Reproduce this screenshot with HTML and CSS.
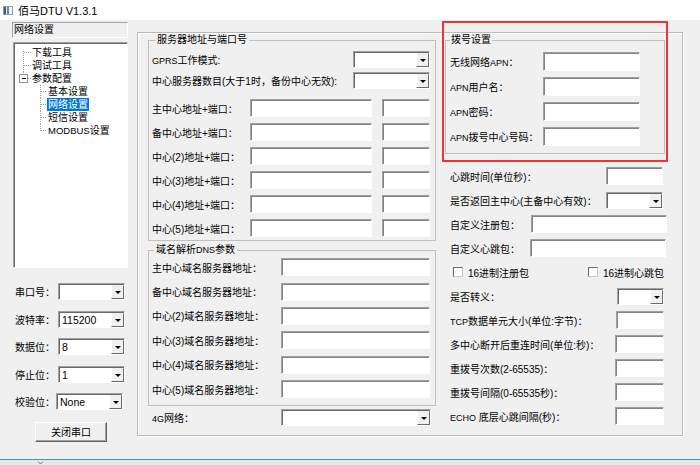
FILE: index.html
```html
<!DOCTYPE html>
<html lang="zh-CN">
<head>
<meta charset="utf-8">
<title>佰马DTU V1.3.1</title>
<link rel="stylesheet" href="styles.css">
</head>
<body>
<div class="win">
  <div class="title">
    <svg class="appicon" viewBox="0 0 10 9" width="10" height="9"><rect x="0.5" y="0.5" width="9" height="8" fill="#f4f4f4" stroke="#9a9a9a"/><rect x="1" y="1" width="2" height="7" fill="#2d5fa8"/><rect x="4" y="1" width="2" height="7" fill="#5a8ccc"/></svg>
    <span>佰马DTU V1.3.1</span>
  </div>
  <div class="body">
    <div class="side">
      <div class="static">网络设置</div>
      <div class="tree">
        <div class="ti"><svg class="tg" width="18" height="13"><path d="M9.5 5V13M10 6.5H17"/></svg><span>下载工具</span></div>
        <div class="ti"><svg class="tg" width="18" height="13"><path d="M9.5 0V13M10 6.5H17"/></svg><span>调试工具</span></div>
        <div class="ti"><svg class="tg" width="18" height="13"><path d="M9.5 0V2M14 6.5H17"/><rect class="box" x="5.5" y="2.5" width="8" height="8"/><path class="minus" d="M7.5 6.5H11.5"/></svg><span>参数配置</span></div>
        <div class="ti"><svg class="tg" width="34" height="13"><path d="M26.5 0V13M27 6.5H33"/></svg><span>基本设置</span></div>
        <div class="ti sel"><svg class="tg" width="34" height="13"><path d="M26.5 0V13M27 6.5H33"/></svg><span>网络设置</span></div>
        <div class="ti"><svg class="tg" width="34" height="13"><path d="M26.5 0V13M27 6.5H33"/></svg><span>短信设置</span></div>
        <div class="ti"><svg class="tg" width="34" height="13"><path d="M26.5 0V6.5M27 6.5H33"/></svg><span><span class="lm">MODBUS</span>设置</span></div>
      </div>
      <div class="serial">
        <div class="srow"><span class="slab">串口号：</span><div class="combo sc"><span class="val"></span><span class="dd"><i></i></span></div></div>
        <div class="srow"><span class="slab">波特率：</span><div class="combo sc"><span class="val">115200</span><span class="dd"><i></i></span></div></div>
        <div class="srow"><span class="slab">数据位：</span><div class="combo sc"><span class="val">8</span><span class="dd"><i></i></span></div></div>
        <div class="srow"><span class="slab">停止位：</span><div class="combo sc"><span class="val">1</span><span class="dd"><i></i></span></div></div>
        <div class="srow"><span class="slab narrow">校验位：</span><div class="combo sc"><span class="val">None</span><span class="dd"><i></i></span></div></div>
      </div>
      <button class="btn">关闭串口</button>
    </div>

    <div class="panel">
      <div class="lcol">
        <fieldset class="grp g1">
          <legend>服务器地址与端口号</legend>
          <div class="row cr"><span class="lab"><span class="l">GPRS</span>工作模式:</span><div class="combo"><span class="val"></span><span class="dd"><i></i></span></div></div>
          <div class="row cr"><span class="lab">中心服务器数目(大于1时，备份中心无效):</span><div class="combo"><span class="val"></span><span class="dd"><i></i></span></div></div>
          <div class="row ar first"><span class="lab">主中心地址+端口：</span><div class="inp addr"></div><div class="inp port"></div></div>
          <div class="row ar"><span class="lab">备中心地址+端口：</span><div class="inp addr"></div><div class="inp port"></div></div>
          <div class="row ar"><span class="lab">中心(2)地址+端口：</span><div class="inp addr"></div><div class="inp port"></div></div>
          <div class="row ar"><span class="lab">中心(3)地址+端口：</span><div class="inp addr"></div><div class="inp port"></div></div>
          <div class="row ar"><span class="lab">中心(4)地址+端口：</span><div class="inp addr"></div><div class="inp port"></div></div>
          <div class="row ar"><span class="lab">中心(5)地址+端口：</span><div class="inp addr"></div><div class="inp port"></div></div>
        </fieldset>
        <fieldset class="grp g2">
          <legend>域名解析<span class="l">DNS</span>参数</legend>
          <div class="row dr first"><span class="lab">主中心域名服务器地址：</span><div class="inp"></div></div>
          <div class="row dr"><span class="lab">备中心域名服务器地址：</span><div class="inp"></div></div>
          <div class="row dr"><span class="lab">中心(2)域名服务器地址：</span><div class="inp"></div></div>
          <div class="row dr"><span class="lab">中心(3)域名服务器地址：</span><div class="inp"></div></div>
          <div class="row dr"><span class="lab">中心(4)域名服务器地址：</span><div class="inp"></div></div>
          <div class="row dr"><span class="lab">中心(5)域名服务器地址：</span><div class="inp"></div></div>
        </fieldset>
        <div class="row r4g"><span class="lab"><span class="l">4G</span>网络：</span><div class="combo"><span class="val"></span><span class="dd"><i></i></span></div></div>
      </div>

      <div class="rcol">
        <fieldset class="grp g3">
          <legend>拨号设置</legend>
          <div class="row pr"><span class="lab">无线网络<span class="l">APN</span>：</span><div class="inp"></div></div>
          <div class="row pr"><span class="lab"><span class="l">APN</span>用户名：</span><div class="inp"></div></div>
          <div class="row pr"><span class="lab"><span class="l">APN</span>密码：</span><div class="inp"></div></div>
          <div class="row pr"><span class="lab"><span class="l">APN</span>拨号中心号码：</span><div class="inp"></div></div>
        </fieldset>
        <div class="rrows">
          <div class="row rr"><span>心跳时间(单位秒)：</span><div class="inp w57 m4"></div></div>
          <div class="row rr"><span>是否返回主中心(主备中心有效)：</span><div class="combo w57 m4"><span class="val"></span><span class="dd"><i></i></span></div></div>
          <div class="row rr"><span>自定义注册包：</span><div class="inp w136"></div></div>
          <div class="row rr"><span>自定义心跳包：</span><div class="inp w136 m1"></div></div>
          <div class="row rr chkrow">
            <label class="chk c1"><span class="cb"></span>16进制注册包</label>
            <label class="chk"><span class="cb"></span>16进制心跳包</label>
          </div>
          <div class="row rr"><span>是否转义：</span><div class="combo w47 m3"><span class="val"></span><span class="dd"><i></i></span></div></div>
          <div class="row rr"><span><span class="l">TCP</span>数据单元大小(单位:字节)：</span><div class="inp w48 m3"></div></div>
          <div class="row rr"><span>多中心断开后重连时间(单位:秒)：</span><div class="inp w49 m3"></div></div>
          <div class="row rr"><span>重拨号次数(2-65535)：</span><div class="inp w49 m3"></div></div>
          <div class="row rr"><span>重拨号间隔(0-65535秒)：</span><div class="inp w49 m3"></div></div>
          <div class="row rr"><span><span class="l">ECHO</span> 底层心跳间隔(秒)：</span><div class="inp w49 m3"></div></div>
        </div>
      </div>
    </div>
  </div>
  <div class="redbox"></div>
</div>
<div class="strip"><svg class="chev" width="7" height="5" viewBox="0 0 7 5"><path d="M1 1.5L3.5 4L6 1.5"/></svg></div>
</body>
</html>
```

FILE: styles.css
```css
* { box-sizing: border-box; }
html, body { margin: 0; padding: 0; }
body {
  width: 700px;
  height: 465px;
  overflow: hidden;
  background: #e8e8e8;
  font-family: "Liberation Sans", "Noto Sans CJK SC", sans-serif;
  font-size: 10px;
  color: #000;
}
.win {
  position: relative;
  height: 460px;
  background: #f0f0f0;
  border-bottom: 1px solid #3f93dc;
}
.title {
  height: 20px;
  background: #fff;
  display: flex;
  align-items: center;
  padding-left: 3px;
  font-size: 11px;
}
.appicon { margin-right: 5px; flex: none; }

.body {
  display: flex;
  align-items: flex-start;
  padding: 2px 0 0 12px;
}

/* left side */
.side { width: 116px; flex: none; display: flex; flex-direction: column; }
.static {
  height: 16px;
  border: 1px solid;
  border-color: #a0a0a0 #fff #fff #a0a0a0;
  line-height: 14px;
  padding-left: 1px;
}
.tree {
  margin: 4px 0 0 1px;
  height: 226px;
  background: #fff;
  border: 1px solid;
  border-color: #a0a0a0 #fff #fff #a0a0a0;
  box-shadow: inset 1px 1px 0 #696969;
  padding-top: 3px;
}
.ti { display: flex; align-items: center; height: 13px; line-height: 13px; white-space: nowrap; }
.tg { flex: none; display: block; }
.tg path { fill: none; stroke: #a0a0a0; stroke-dasharray: 1 1; shape-rendering: crispEdges; }
.tg .box { fill: #fff; stroke: #919191; shape-rendering: crispEdges; }
.tg .minus { stroke: #000; stroke-dasharray: none; }
.ti.sel > span { background: #0078d7; color: #fff; padding: 0 1px; margin-left: -1px; }
.lm { font-size: 9.5px; }

.serial { margin-top: 10px; }
.srow { height: 27.5px; display: flex; align-items: center; padding-left: 3px; }
.slab { width: 43px; flex: none; white-space: nowrap; }
.slab.narrow { width: 41px; }
.sc { width: 67px; }

.btn {
  margin: 6px 0 0 23px;
  width: 72px;
  height: 20px;
  padding: 0;
  font: inherit;
  color: #000;
  background: #f0f0f0;
  border: 1px solid;
  border-color: #fff #646464 #646464 #fff;
  box-shadow: inset -1px -1px 0 #a0a0a0;
}

/* controls */
.combo {
  height: 17px;
  display: flex;
  flex: none;
  background: #fff;
  border: 1px solid;
  border-color: #a0a0a0 #fff #fff #a0a0a0;
  box-shadow: inset 1px 1px 0 #696969;
}
.combo .val { flex: 1; padding-left: 3px; padding-top: 1px; line-height: 14px; font-size: 10.5px; white-space: nowrap; }
.combo .dd {
  width: 13px;
  flex: none;
  margin: 1px 0 0 0;
  background: #f0f0f0;
  border: 1px solid;
  border-color: #f0f0f0 #696969 #696969 #fff;
  display: flex;
  align-items: center;
  justify-content: center;
}
.combo .dd i {
  display: block;
  width: 0;
  height: 0;
  border-left: 3px solid transparent;
  border-right: 3px solid transparent;
  border-top: 3px solid #000;
  margin-top: 1px;
}
.inp {
  height: 18px;
  flex: none;
  background: #fff;
  border: 1px solid;
  border-color: #a0a0a0 #fff #fff #a0a0a0;
  box-shadow: inset 1px 1px 0 #838383;
}

/* panel */
.panel {
  margin: 10px 0 0 9px;
  width: 546px;
  height: 404px;
  flex: none;
  border: 1px solid #b9b9b9;
  box-shadow: inset 1px 1px 0 #fff, 1px 1px 0 #fff;
  display: flex;
  align-items: flex-start;
  padding: 1px 0 0 10px;
}
.lcol { width: 288px; flex: none; }
.rcol { width: 222px; flex: none; margin-left: 9px; }

.grp {
  margin: 0;
  border: 1px solid #c0c0c0;
  min-inline-size: 0;
}
.grp legend {
  padding: 0 2px;
  line-height: 12px;
  white-space: nowrap;
}
.l { font-size: 9px; }

.row { display: flex; align-items: center; white-space: nowrap; }
.lab { flex: none; white-space: nowrap; }

.g1 { width: 288px; padding: 3px 5px 0 3px; }
.g1 legend { margin-left: 3px; }
.g1 .cr { height: 21px; }
.g1 .cr .combo { width: 77px; margin-left: auto; }
.g1 .ar { height: 24px; }
.g1 .ar.first { margin-top: 5px; }
.g1 .lab { width: 98px; }
.g1 .addr { width: 122px; }
.g1 .port { width: 48px; margin-left: 10px; }

.g2 { width: 288px; margin-top: 3px; padding: 0 5px 4px 3px; }
.g2 legend { margin-left: 2px; }
.g2 .dr { height: 24.4px; }
.g2 .dr.first { margin-top: -1px; }
.g2 .lab { width: 129px; }
.g2 .inp { width: 149px; }

.r4g { height: 23px; padding-left: 4px; }
.r4g .lab { width: 129px; }
.r4g .combo { width: 150px; }

.g3 { width: 220px; padding: 3px 23px 4px 4px; }
.g3 legend { margin-left: 0; padding: 0 1px; }
.g3 .pr { height: 25px; }
.g3 .lab { width: 93px; }
.g3 .inp { width: 97px; height: 19px; }

.rrows { margin-top: 10px; padding-left: 5px; }
.rr { height: 24px; }
.rr > .inp, .rr > .combo { margin-left: auto; }
.w57 { width: 57px; }
.w47 { width: 47px; }
.w48 { width: 48px; }
.w49 { width: 49px; }
.w136 { width: 136px; }
.m1 { margin-right: 1px; }
.m3 { margin-right: 3px; }
.m4 { margin-right: 4px; }
.rr > .combo { height: 17px; }

.chkrow { padding-left: 3px; }
.chk { display: flex; align-items: center; }
.chk.c1 { width: 135px; }
.cb {
  width: 10px;
  height: 10px;
  margin-right: 5px;
  background: #fff;
  border: 1px solid;
  border-color: #6d6d6d #c8c8c8 #c8c8c8 #6d6d6d;
}

.redbox {
  position: absolute;
  left: 442px;
  top: 21px;
  width: 226px;
  height: 141px;
  border: 2px solid #f23333;
}

.strip { height: 5px; overflow: hidden; padding-left: 37px; }
.chev { display: block; }
.chev path { fill: none; stroke: #777; stroke-width: 1; }
```
